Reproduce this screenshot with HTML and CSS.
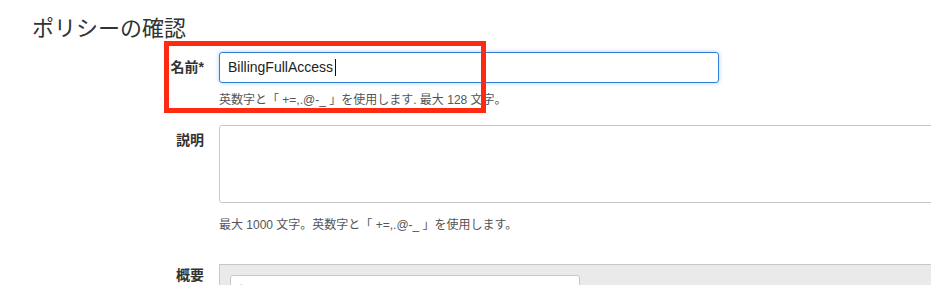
FILE: index.html
```html
<!DOCTYPE html>
<html lang="ja">
<head>
    <meta charset="UTF-8">
    <title>ポリシーの確認</title>
    <link rel="stylesheet" href="styles.css">
</head>
<body>
    <h1 class="page-title">ポリシーの確認</h1>

    <div class="policy-form">
        <div class="form-row">
            <label class="form-label">名前*</label>
            <div class="form-field">
                <div class="text-input">BillingFullAccess<span class="caret"></span></div>
                <p class="hint">英数字と「 +=,.@-_ 」を使用します. 最大 128 文字。</p>
            </div>
        </div>

        <div class="form-row">
            <label class="form-label">説明</label>
            <div class="form-field">
                <div class="text-area"></div>
                <p class="hint">最大 1000 文字。英数字と「 +=,.@-_ 」を使用します。</p>
            </div>
        </div>

        <div class="form-row summary-row">
            <label class="form-label summary-label">概要</label>
            <div class="form-field">
                <div class="summary-panel">
                    <div class="filter-box">
                        <svg class="search-icon" width="12" height="12" viewBox="0 0 12 12">
                            <circle cx="5" cy="5" r="3.6" fill="none" stroke="#555" stroke-width="1.4"/>
                            <line x1="7.6" y1="7.6" x2="11" y2="11" stroke="#555" stroke-width="1.6"/>
                        </svg>
                    </div>
                </div>
            </div>
        </div>
    </div>

    <!-- highlight annotation -->
    <div class="highlight"></div>
</body>
</html>
```

FILE: styles.css
```css
* {
    margin: 0;
    padding: 0;
    box-sizing: border-box;
}

body {
    font-family: 'Liberation Sans', 'Noto Sans CJK JP', sans-serif;
    background: #fff;
    color: #333;
    overflow: hidden;
    position: relative;
    height: 285px;
}

.page-title {
    font-size: 22px;
    font-weight: normal;
    line-height: 28px;
    padding: 15px 0 0 32px;
    color: #333;
    height: 42px;
}

.policy-form {
    margin-top: 10px;
}

.form-row {
    display: flex;
    gap: 15px;
}

.form-label {
    width: 204px;
    flex-shrink: 0;
    text-align: right;
    font-size: 14px;
    font-weight: bold;
    line-height: 31px;
    color: #333;
}

.form-field {
    width: 760px;
    flex-shrink: 0;
}

.text-input {
    width: 500px;
    height: 31px;
    border: 1px solid #2f7fd8;
    border-radius: 3px;
    box-shadow: 0 0 4px rgba(70, 140, 230, 0.45);
    padding: 0 8px;
    font-size: 14px;
    line-height: 29px;
    color: #222;
}

.caret {
    display: inline-block;
    width: 1px;
    height: 17px;
    background: #111;
    vertical-align: -4px;
    margin-left: 2px;
}

.hint {
    font-size: 12px;
    line-height: 16px;
    color: #555;
    margin-top: 9px;
    margin-bottom: 17px;
}

.text-area {
    width: 740px;
    height: 78px;
    border: 1px solid #c8c8c8;
    border-radius: 3px;
}

.text-area + .hint {
    margin-top: 14px;
    margin-bottom: 31px;
}

.summary-label {
    line-height: 22px;
}

.summary-panel {
    width: 740px;
    height: 60px;
    background: #eaeaea;
    border: 1px solid #c8c8c8;
    padding: 10px;
}

.filter-box {
    width: 350px;
    height: 30px;
    background: #fff;
    border: 1px solid #c8c8c8;
    border-radius: 3px;
    display: flex;
    align-items: center;
    padding: 0 5px;
}

.search-icon {
    flex-shrink: 0;
}

.highlight {
    position: absolute;
    left: 164px;
    top: 41px;
    width: 322px;
    height: 72px;
    border: 5px solid #ff2a12;
}
```
